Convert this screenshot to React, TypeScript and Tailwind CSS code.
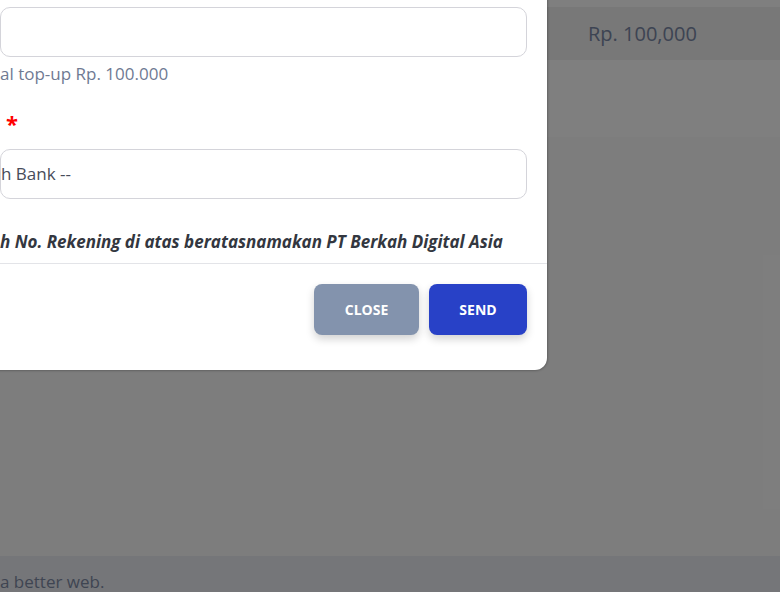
import React from 'react';

const Page: React.FC = () => (
  <div className="flex h-[592px] flex-col bg-[#fbfbfb]">
    <div className="flex flex-col bg-white">
      <div className="h-[7px]" />
      <div className="flex h-[53px] items-center bg-[#f0f0f0]">
        <span className="ml-[588px] text-[20px] text-[#7a88a6]">Rp. 100,000</span>
      </div>
      <div className="h-[77px]" />
    </div>
    <div className="flex-1" />
    <footer className="flex h-[36px] items-start bg-[#ebedf2] pt-[14px]">
      <span className="text-[17px] leading-[24px] text-[#7e8aa5]">a better web.</span>
    </footer>
  </div>
);

const TopUpModal: React.FC = () => (
  <div className="absolute -top-[20px] left-[-20px] right-[233px] rounded-xl bg-white shadow-[0_0_3px_rgba(0,0,0,0.45)]">
    <div className="flex flex-col px-5 pb-[10px] pt-[27px]">
      <input
        readOnly
        className="h-[50px] w-full rounded-[10px] border border-[#d4d4da] bg-white px-4 text-[18px] outline-none"
      />
      <p className="mt-[5px] text-[17px] leading-[24px] text-[#6f7a93]">al top-up Rp. 100.000</p>
      <label className="mt-[24px] h-[27px] text-[18px] font-bold leading-[27px] text-[#374151]">
        <span className="ml-[6px] text-[22px] leading-[27px] text-[#ff0000]">*</span>
      </label>
      <div className="mt-[12px] flex h-[50px] w-full items-center rounded-[10px] border border-[#d4d4da] bg-white">
        <span className="text-[17px] text-[#474c5a]">h Bank --</span>
      </div>
      <p className="mt-[32px] text-[17px] font-bold italic leading-[22px] text-[#333740]">
        h No. Rekening di atas beratasnamakan PT Berkah Digital Asia
      </p>
    </div>
    <div className="border-t border-[#e3e4e8]" />
    <div className="flex justify-end gap-[10px] px-5 pb-[35px] pt-[20px]">
      <button className="h-[51px] w-[105px] rounded-lg bg-[#8393ad] text-[14px] font-bold text-white shadow-[0_4px_8px_rgba(0,0,0,0.18)]">
        CLOSE
      </button>
      <button className="h-[51px] w-[98px] rounded-lg bg-[#2841c7] text-[14px] font-bold text-white shadow-[0_4px_8px_rgba(0,0,0,0.18)]">
        SEND
      </button>
    </div>
  </div>
);

export default function App() {
  return (
    <div className="relative h-[592px] w-[780px] overflow-hidden font-['Open_Sans',sans-serif]">
      <Page />
      <div className="absolute inset-0 bg-black/50" />
      <TopUpModal />
    </div>
  );
}
